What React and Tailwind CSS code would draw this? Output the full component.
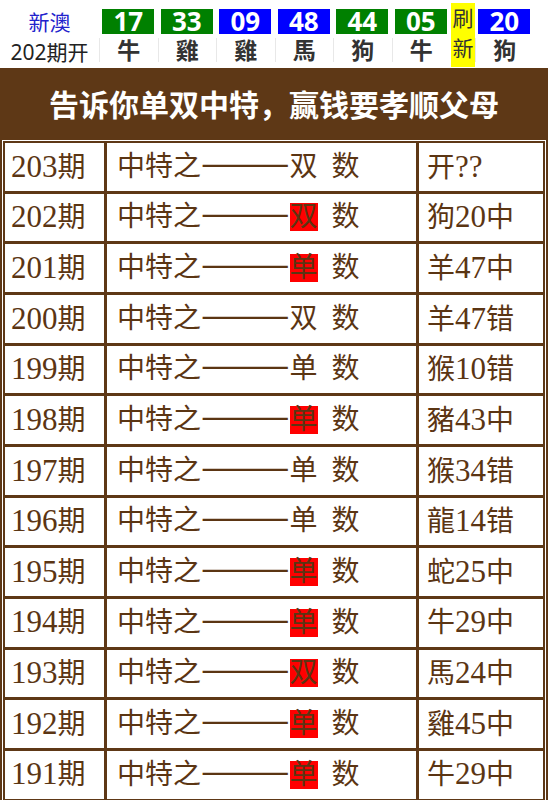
const balls = [
  { n: '17', z: '牛', c: 'bg-[#008000]' },
  { n: '33', z: '雞', c: 'bg-[#008000]' },
  { n: '09', z: '雞', c: 'bg-[#0000ff]' },
  { n: '48', z: '馬', c: 'bg-[#0000ff]' },
  { n: '44', z: '狗', c: 'bg-[#008000]' },
  { n: '05', z: '牛', c: 'bg-[#008000]' },
]

const rows = [
  ['203', '双', false, '开??'],
  ['202', '双', true, '狗20中'],
  ['201', '单', true, '羊47中'],
  ['200', '双', false, '羊47错'],
  ['199', '单', false, '猴10错'],
  ['198', '单', true, '豬43中'],
  ['197', '单', false, '猴34错'],
  ['196', '单', false, '龍14错'],
  ['195', '单', true, '蛇25中'],
  ['194', '单', true, '牛29中'],
  ['193', '双', true, '馬24中'],
  ['192', '单', true, '雞45中'],
  ['191', '单', true, '牛29中'],
]

const sans = { fontFamily: '"Noto Sans", "Noto Sans CJK SC", sans-serif' }
const serif = { fontFamily: '"Liberation Serif", "Noto Sans CJK SC", serif' }

// digits in the table are a touch wider than the han characters
function Txt({ s }) {
  return s.split(/(\d+|\?+)/).map((part, i) =>
    /^[\d?]+$/.test(part) ? <span key={i} className="text-[31px]">{part}</span> : part
  )
}

function Ball({ n, z, c }) {
  return (
    <div className="w-[58.5px] flex flex-col items-center">
      <div className={`${c} w-[52px] h-[25px] mt-[9px] text-white font-bold text-[26px] leading-[25px] text-center`}>{n}</div>
      <div className="w-full border-l border-[#e8e8e8] mt-[4px] h-[24px] leading-[24px] text-center text-[23px] font-bold text-[#333]">{z}</div>
    </div>
  )
}

export default function App() {
  return (
    <div className="w-[548px] bg-white" style={sans}>
      <div className="flex h-[68px]">
        <div className="w-[99px] flex flex-col items-center">
          <div className="mt-[9px] h-[26px] leading-[26px] text-[21px] text-[#2222cc]">新澳</div>
          <div className="mt-[4px] h-[26px] leading-[26px] text-[21px] text-[#222]">202期开</div>
        </div>
        {balls.map((b, i) => <Ball key={i} {...b} />)}
        <div className="ml-px mt-[3px] w-[24px] h-[64px] bg-[#ffff00] flex flex-col items-center text-[21px] leading-[30px] text-[#333]">
          <span>刷</span>
          <span>新</span>
        </div>
        <Ball n="20" z="狗" c="bg-[#0000ff]" />
      </div>

      <div className="bg-[#5e3816] h-[72px] flex items-center justify-center text-white font-bold text-[30px]">
        告诉你单双中特，赢钱要孝顺父母
      </div>

      <div className="border-x-2 border-[#5e3816] px-px pt-px">
        <div className="bg-[#5e3816] p-[2px] grid grid-cols-[99px_309px_124px] auto-rows-[47.67px] gap-[3px] text-[28px] text-[#5b3513]" style={serif}>
          {rows.map(([p, d, hl, r]) => (
            <div key={p} className="contents">
              <div className="bg-white flex items-center pl-[6px]">
                <span><span className="text-[31px]">{p}</span>期</span>
              </div>
              <div className="bg-white flex items-center pl-[10px]">
                <span>中特之</span>
                <span className="relative -top-[7px] font-['Noto_Sans_CJK_SC'] text-[36px] leading-[28px]">———</span>
                <span className={`inline-block h-[28px] leading-[28px] ${hl ? 'bg-[#ff0000]' : ''}`}>{d}</span>
                <span className="ml-[14px]">数</span>
              </div>
              <div className="bg-white flex items-center pl-[8px]">
                <span><Txt s={r} /></span>
              </div>
            </div>
          ))}
        </div>
      </div>
    </div>
  )
}
